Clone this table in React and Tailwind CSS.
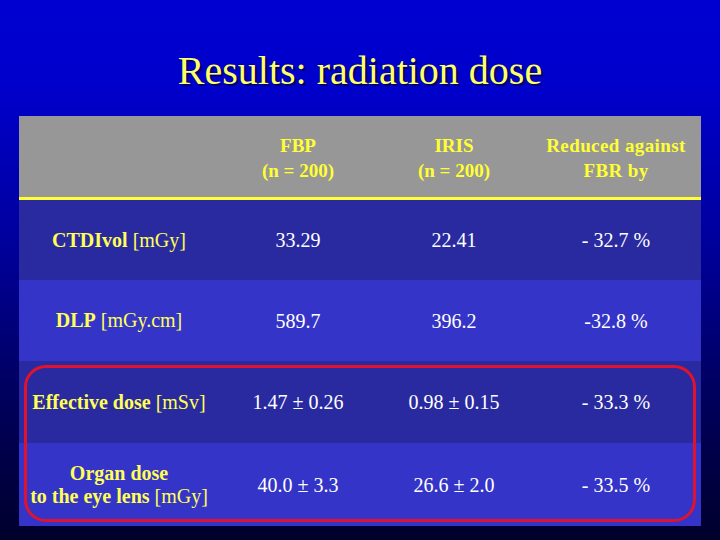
import React from "react";

const rows = [
  { label: <><b>CTDIvol</b> [mGy]</>, fbp: "33.29", iris: "22.41", red: "- 32.7 %", bg: "bg-[#2a2aa0]", h: "h-[80px]" },
  { label: <><b>DLP</b> [mGy.cm]</>, fbp: "589.7", iris: "396.2", red: "-32.8 %", bg: "bg-[#3434c8]", h: "h-[81px]" },
  { label: <><b>Effective dose</b> [mSv]</>, fbp: "1.47 ± 0.26", iris: "0.98 ± 0.15", red: "- 33.3 %", bg: "bg-[#2a2aa0]", h: "h-[82px]" },
  {
    label: <><b>Organ dose</b><br /><b>to the eye lens</b> [mGy]</>,
    fbp: "40.0 ± 3.3",
    iris: "26.6 ± 2.0",
    red: "- 33.5 %",
    bg: "bg-[#3434c8]",
    h: "h-[83px]",
  },
];

const cols = "grid grid-cols-[200px_158px_154px_170px]";

export default function App() {
  return (
    <div
      className="w-[720px] h-[540px] overflow-hidden bg-[linear-gradient(to_bottom,#0000d0_0%,#0000cc_16%,#00009c_45%,#000060_72%,#00002c_100%)] pt-[47px] font-['Liberation_Serif',serif]"
    >
      <h1 className="h-[48px] leading-[48px] text-center text-[40px] text-[#ffff66] [text-shadow:2px_2px_1px_#000060]">
        Results: radiation dose
      </h1>

      <div className="relative ml-[19px] mt-[21px] w-[682px]">
        {/* header */}
        <div className={`${cols} h-[81px] bg-[#979797] text-[#ffff33] font-bold text-[19px] leading-[25px]`}>
          <div />
          <div className="flex flex-col items-center justify-center pt-[2px]">
            <span>FBP</span>
            <span>(n = 200)</span>
          </div>
          <div className="flex flex-col items-center justify-center pt-[2px]">
            <span>IRIS</span>
            <span>(n = 200)</span>
          </div>
          <div className="flex flex-col items-center justify-center pt-[2px] tracking-[0.4px]">
            <span>Reduced against</span>
            <span>FBR by</span>
          </div>
        </div>
        <div className="h-[3px] bg-[#ffff33]" />

        {rows.map((r, i) => (
          <div key={i} className={`${cols} ${r.h} ${r.bg} text-[20px]`}>
            <div className="flex items-center justify-center text-center text-[#ffff55] leading-[23px]">
              <span>{r.label}</span>
            </div>
            <div className="flex items-center justify-center text-white">{r.fbp}</div>
            <div className="flex items-center justify-center text-white">{r.iris}</div>
            <div className="flex items-center justify-center text-white">{r.red}</div>
          </div>
        ))}

        {/* highlight frame */}
        <div className="absolute left-[5px] top-[249px] w-[672px] h-[157px] rounded-[22px] border-[3px] border-[#e0122e] pointer-events-none" />
      </div>
    </div>
  );
}
